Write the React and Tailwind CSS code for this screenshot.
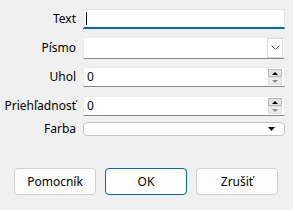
export default function App() {
  const label = "w-[76px] shrink-0 text-right text-[12px] leading-none text-black";
  return (
    <div
      className="w-[293px] h-[210px] bg-[#f0f0f0] flex flex-col overflow-hidden"
      style={{ fontFamily: '"Noto Sans", "Open Sans", sans-serif' }}
    >
      {/* Text */}
      <div className="flex items-center gap-[7px] mt-[9px]">
        <div className={label}>Text</div>
        <div className="w-[202px] h-[20px] bg-white border border-[#e5e5e5] border-b-2 border-b-[#0067c0] flex items-center pl-[2px]">
          <div className="w-[1px] h-[13px] bg-black" />
        </div>
      </div>
      {/* Písmo */}
      <div className="flex items-center gap-[7px] mt-[8px]">
        <div className={label}>Písmo</div>
        <div className="w-[202px] h-[22px] bg-white border border-[#ececec] border-b-[#8a8a8a] flex items-center justify-end pr-[1px]">
          <div className="w-[16px] h-[20px] border border-[#d9d9d9] bg-white flex items-center justify-center">
            <svg width="9" height="6" viewBox="0 0 9 6">
              <path d="M0.5 0.5 L4.5 4.5 L8.5 0.5" fill="none" stroke="#606060" strokeWidth="1" />
            </svg>
          </div>
        </div>
      </div>
      {/* Uhol */}
      <div className="flex items-center gap-[7px] mt-[8px]">
        <div className={label}>Uhol</div>
        <Spin />
      </div>
      {/* Priehľadnosť */}
      <div className="flex items-center gap-[7px] mt-[9px]">
        <div className={label}>Priehľadnosť</div>
        <Spin />
      </div>
      {/* Farba */}
      <div className="flex items-center gap-[7px] mt-[6px]">
        <div className={label}>Farba</div>
        <div className="w-[202px] h-[14px] bg-white border border-[#c4c4c4] rounded-[4px] flex items-center justify-end pr-[9px]">
          <svg width="7" height="4" viewBox="0 0 7 4">
            <path d="M0 0 L7 0 L3.5 4 Z" fill="#000" />
          </svg>
        </div>
      </div>
      {/* Buttons */}
      <div className="flex gap-[9px] pl-[14px] mt-[32px]">
        <Btn>Pomocník</Btn>
        <Btn primary>OK</Btn>
        <Btn>Zrušiť</Btn>
      </div>
    </div>
  );
}

function Spin() {
  return (
    <div className="w-[202px] h-[20px] bg-white border border-[#ececec] border-b-[#8a8a8a] flex items-center justify-between pl-[3px] pr-[2px]">
      <span className="text-[12px] leading-none text-black">0</span>
      <div className="flex flex-col w-[14px] h-[16px]">
        <div className="h-[8px] bg-[#e3e3e3] border border-[#b8b8b8] flex items-center justify-center">
          <svg width="6" height="3" viewBox="0 0 6 3">
            <path d="M0 3 L6 3 L3 0 Z" fill="#000" />
          </svg>
        </div>
        <div className="h-[8px] bg-[#ececec] border border-[#e0e0e0] flex items-center justify-center">
          <svg width="6" height="3" viewBox="0 0 6 3">
            <path d="M0 0 L6 0 L3 3 Z" fill="#8c8c8c" />
          </svg>
        </div>
      </div>
    </div>
  );
}

function Btn({ children, primary }) {
  return (
    <div
      className={
        "w-[82px] h-[27px] rounded-[4px] bg-[#fdfdfd] flex items-center justify-center text-[12px] text-black border " +
        (primary ? "border-[#0067c0]" : "border-[#d0d0d0]")
      }
    >
      {children}
    </div>
  );
}
